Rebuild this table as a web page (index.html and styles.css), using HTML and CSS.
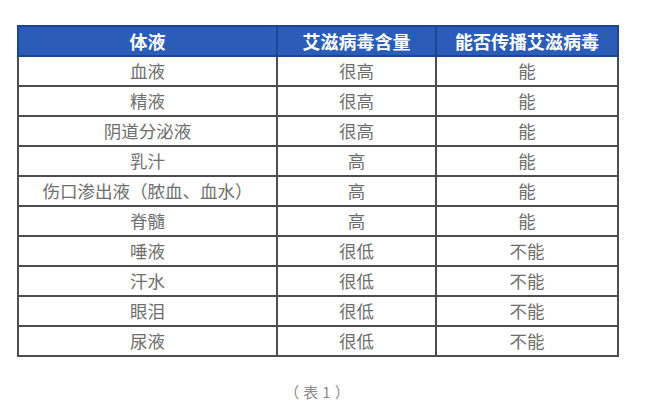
FILE: index.html
```html
<!DOCTYPE html>
<html lang="zh">
<head>
<meta charset="utf-8">
<link rel="stylesheet" href="styles.css">
</head>
<body>
<div class="page">
  <table class="data">
    <colgroup>
      <col class="c1"><col class="c2"><col class="c3">
    </colgroup>
    <thead>
      <tr><th>体液</th><th>艾滋病毒含量</th><th>能否传播艾滋病毒</th></tr>
    </thead>
    <tbody>
      <tr><td>血液</td><td>很高</td><td>能</td></tr>
      <tr><td>精液</td><td>很高</td><td>能</td></tr>
      <tr><td>阴道分泌液</td><td>很高</td><td>能</td></tr>
      <tr><td>乳汁</td><td>高</td><td>能</td></tr>
      <tr><td>伤口渗出液（脓血、血水）</td><td>高</td><td>能</td></tr>
      <tr><td>脊髓</td><td>高</td><td>能</td></tr>
      <tr><td>唾液</td><td>很低</td><td>不能</td></tr>
      <tr><td>汗水</td><td>很低</td><td>不能</td></tr>
      <tr><td>眼泪</td><td>很低</td><td>不能</td></tr>
      <tr><td>尿液</td><td>很低</td><td>不能</td></tr>
    </tbody>
  </table>
  <p class="caption">（表1）</p>
</div>
</body>
</html>
```
FILE: styles.css
```css
html, body {
  margin: 0;
  padding: 0;
  background: #ffffff;
}
.page {
  width: 600px;
  padding: 25px 0 0 17px;
  font-family: "Noto Sans CJK SC", "Liberation Sans", sans-serif;
}
.data {
  width: 600px;
  border-collapse: collapse;
  table-layout: fixed;
}
.c1 { width: 259px; }
.c2 { width: 159px; }
.c3 { width: 182px; }
.data th {
  height: 28px;
  padding: 0;
  background: #2a5cb8;
  color: #ffffff;
  font-size: 18px;
  font-weight: 700;
  line-height: 28px;
  border: 2px solid #1d4594;
}
.data td {
  height: 28px;
  padding: 0;
  text-align: center;
  color: #6e6e6e;
  font-size: 17.5px;
  line-height: 28px;
  border: 2px solid #4d4d4d;
}
.caption {
  margin: 25px 0 0 0;
  padding-left: 4px;
  text-align: center;
  color: #8a8a8a;
  font-size: 15px;
  letter-spacing: 4px;
  line-height: 20px;
}
```
